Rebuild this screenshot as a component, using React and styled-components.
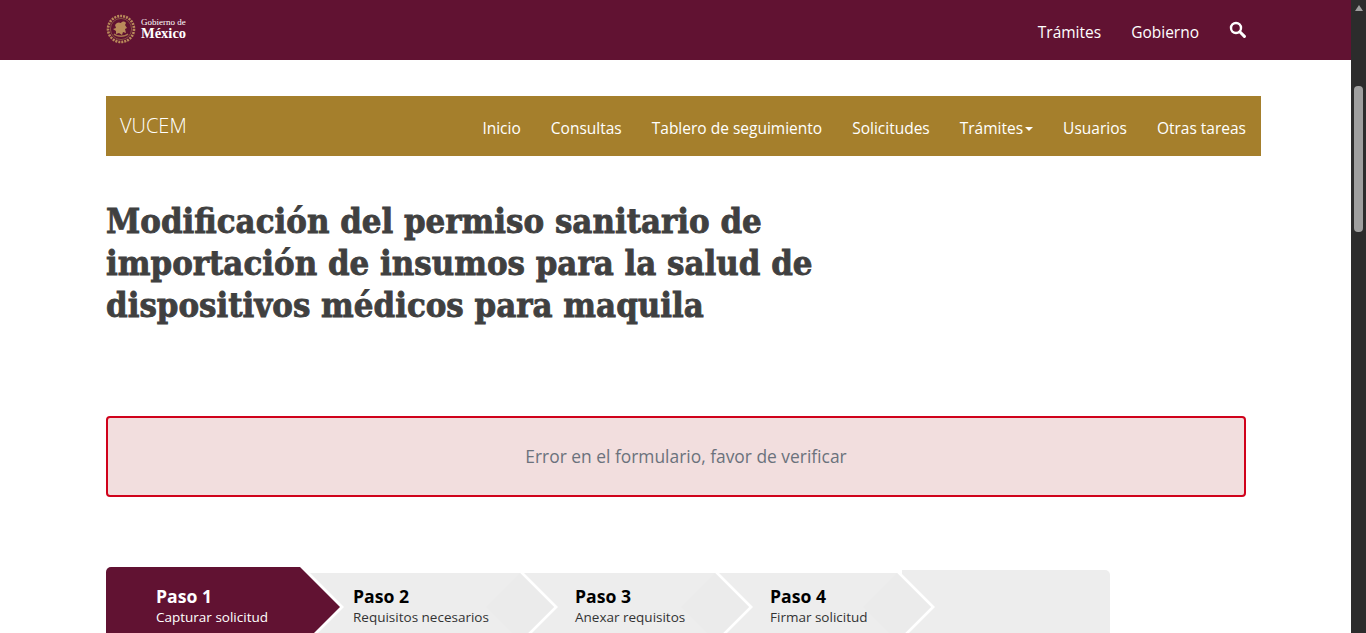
import React from "react"
import styled, { createGlobalStyle } from "styled-components"

const GlobalStyle = createGlobalStyle`
  html, body {
    margin: 0;
    padding: 0;
    height: 100%;
    overflow: hidden;
    background: #fff;
    font-family: "Open Sans", "Noto Sans", sans-serif;
  }
`

const Shell = styled.div`
  display: flex;
  height: 633px;
  overflow: hidden;
`

const Page = styled.div`
  flex: 1;
  min-width: 0;
  overflow: hidden;
`

const ScrollRail = styled.div`
  width: 15px;
  flex-shrink: 0;
  background: #2c2c2c;
  display: flex;
  flex-direction: column;
  align-items: center;
`

const ScrollArrow = styled.div`
  margin-top: 5px;
  width: 0;
  height: 0;
  border-left: 4.5px solid transparent;
  border-right: 4.5px solid transparent;
  border-bottom: 6px solid #9f9f9f;
`

const ScrollThumb = styled.div`
  margin-top: 75px;
  width: 9px;
  height: 146px;
  border-radius: 4px;
  background: #9f9f9f;
`

const TopBar = styled.header`
  height: 60px;
  background: #611232;
  padding: 0 105px 0 106px;
  display: flex;
  align-items: center;
  justify-content: space-between;
`

const Brand = styled.div`
  display: flex;
  align-items: center;
  gap: 5px;
  margin-top: -2px;
`

const BrandText = styled.div`
  display: flex;
  flex-direction: column;
  color: #fff;
  font-family: "Liberation Serif", serif;
`

const BrandSmall = styled.span`
  font-size: 9px;
  line-height: 9px;
`

const BrandBig = styled.span`
  font-size: 14.5px;
  line-height: 13px;
  font-weight: 700;
`

const TopLinks = styled.nav`
  display: flex;
  align-items: center;
  gap: 30px;
  margin-top: 3px;
`

const TopLink = styled.a`
  color: #fff;
  font-size: 15.5px;
  line-height: 24px;
`

const SearchIcon = styled.svg`
  width: 17px;
  height: 17px;
  margin-top: -4px;
`

const Main = styled.main`
  padding: 36px 105px 0 106px;
`

const SubNav = styled.nav`
  height: 60px;
  margin-right: -15px;
  background: #a57f2c;
  display: flex;
  justify-content: space-between;
  padding: 0 15px 0 14px;
  color: #fff;
`

const SubBrand = styled.a`
  font-size: 20px;
  font-weight: 300;
  line-height: 24px;
  margin-top: 18px;
`

const SubLinks = styled.div`
  display: flex;
  gap: 30px;
  margin-top: 20px;
`

const SubLink = styled.a`
  font-size: 15.5px;
  line-height: 24px;
  height: 24px;
  display: flex;
  align-items: center;
`

const Caret = styled.span`
  margin-left: 2px;
  margin-top: 2px;
  width: 0;
  height: 0;
  border-left: 4px solid transparent;
  border-right: 4px solid transparent;
  border-top: 4px solid #fff;
`

const Title = styled.h1`
  margin: 44px 0 0;
  max-width: 760px;
  color: #404040;
  font-family: "DejaVu Serif Condensed", "DejaVu Serif", serif;
  font-size: 34.4px;
  line-height: 42px;
  font-weight: 700;
  -webkit-text-stroke: 0.8px #404040;
`

const Alert = styled.div`
  margin-top: 90px;
  height: 81px;
  box-sizing: border-box;
  border: 2px solid #d0021b;
  border-radius: 4px;
  padding: 0 0 2px 20px;
  background: #f2dede;
  color: #6b727c;
  font-size: 17.4px;
  display: flex;
  align-items: center;
  justify-content: center;
`

const Steps = styled.div`
  margin-top: 70px;
  display: flex;
  align-items: flex-start;
`

const Step = styled.div`
  position: relative;
  flex-shrink: 0;
  box-sizing: border-box;
  width: ${p => p.$width}px;
  height: ${p => (p.$active ? 80 : 68)}px;
  margin-top: ${p => (p.$active ? 0 : 6)}px;
  margin-left: ${p => (p.$active ? 0 : -38)}px;
  padding-left: ${p => p.$pad}px;
  padding-top: ${p => (p.$active ? 18 : 12)}px;
  z-index: ${p => p.$layer};
  background: #fff;
  color: ${p => (p.$active ? "#fff" : "#000")};
  clip-path: polygon(
    0 0,
    calc(100% - ${p => (p.$active ? 40 : 34)}px) 0,
    100% 50%,
    calc(100% - ${p => (p.$active ? 40 : 34)}px) 100%,
    0 100%
  );

  &::before {
    content: "";
    position: absolute;
    inset: 0;
    background: ${p => (p.$active ? "#611232" : "#ededed")};
    border-radius: ${p => (p.$active ? "5px 0 0 0" : "0")};
    clip-path: polygon(
      0 0,
      calc(100% - ${p => (p.$active ? 44 : 38)}px) 0,
      calc(100% - 4px) 50%,
      calc(100% - ${p => (p.$active ? 44 : 38)}px) 100%,
      0 100%
    );
  }

  &::after {
    content: "";
    position: absolute;
    inset: 0;
    background: ${p => (p.$active ? "transparent" : "#ebebeb")};
    clip-path: polygon(
      calc(100% - 72px) 50%,
      calc(100% - 38px) 0,
      calc(100% - 4px) 50%,
      calc(100% - 38px) 100%
    );
  }
`

const StepName = styled.div`
  position: relative;
  z-index: 1;
  font-size: 17.6px;
  line-height: 22px;
  font-weight: 700;
`

const StepHint = styled.div`
  position: relative;
  z-index: 1;
  font-size: 13.5px;
  line-height: 20px;
  color: ${p => (p.$active ? "#fff" : "#333")};
`

const StepTail = styled.div`
  flex-shrink: 0;
  width: 208px;
  height: 70px;
  margin: 3px 0 0 -33px;
  border-radius: 0 5px 0 0;
  background: #ededed;
`

const steps = [
  { name: "Paso 1", hint: "Capturar solicitud", width: 238, pad: 50, active: true },
  { name: "Paso 2", hint: "Requisitos necesarios", width: 252, pad: 47 },
  { name: "Paso 3", hint: "Anexar requisitos", width: 233, pad: 55 },
  { name: "Paso 4", hint: "Firmar solicitud", width: 220, pad: 55 },
]

const subLinks = ["Inicio", "Consultas", "Tablero de seguimiento", "Solicitudes", "Trámites", "Usuarios", "Otras tareas"]

function Emblem() {
  return (
    <svg width="30" height="30" viewBox="0 0 30 30" fill="none">
      <circle cx="15" cy="15" r="13" stroke="#b98a5a" strokeWidth="2.6" strokeDasharray="2 1" />
      <circle cx="15" cy="15" r="10.6" stroke="#8f5f48" strokeWidth="0.8" />
      <path d="M9 11c2-3 4-3 6-2 1-2 4-2 5 0l-1 2 2 3-2 1 1 4-3-1-1 3-3-2-3 1 0-3-3-2 3-1z" fill="#b98a5a" />
      <path d="M8 20c3 3 11 3 14 0" stroke="#a9774f" strokeWidth="1.4" />
    </svg>
  )
}

export default function App() {
  return (
    <Shell>
      <GlobalStyle />
      <Page>
        <TopBar>
          <Brand>
            <Emblem />
            <BrandText>
              <BrandSmall>Gobierno de</BrandSmall>
              <BrandBig>México</BrandBig>
            </BrandText>
          </Brand>
          <TopLinks>
            <TopLink>Trámites</TopLink>
            <TopLink>Gobierno</TopLink>
            <SearchIcon viewBox="0 0 17 17" fill="none" stroke="#fff">
              <circle cx="7" cy="7" r="5" strokeWidth="2.4" />
              <path d="M10.8 10.8l4.6 4.6" strokeWidth="3" strokeLinecap="round" />
            </SearchIcon>
          </TopLinks>
        </TopBar>
        <Main>
          <SubNav>
            <SubBrand>VUCEM</SubBrand>
            <SubLinks>
              {subLinks.map(label => (
                <SubLink key={label}>
                  {label}
                  {label === "Trámites" && <Caret />}
                </SubLink>
              ))}
            </SubLinks>
          </SubNav>
          <Title>
            Modificación del permiso sanitario de importación de insumos para la salud de dispositivos médicos para maquila
          </Title>
          <Alert>Error en el formulario, favor de verificar</Alert>
          <Steps>
            {steps.map((step, i) => (
              <Step key={step.name} $width={step.width} $pad={step.pad} $active={step.active} $layer={10 - i}>
                <StepName>{step.name}</StepName>
                <StepHint $active={step.active}>{step.hint}</StepHint>
              </Step>
            ))}
            <StepTail />
          </Steps>
        </Main>
      </Page>
      <ScrollRail>
        <ScrollArrow />
        <ScrollThumb />
      </ScrollRail>
    </Shell>
  )
}
